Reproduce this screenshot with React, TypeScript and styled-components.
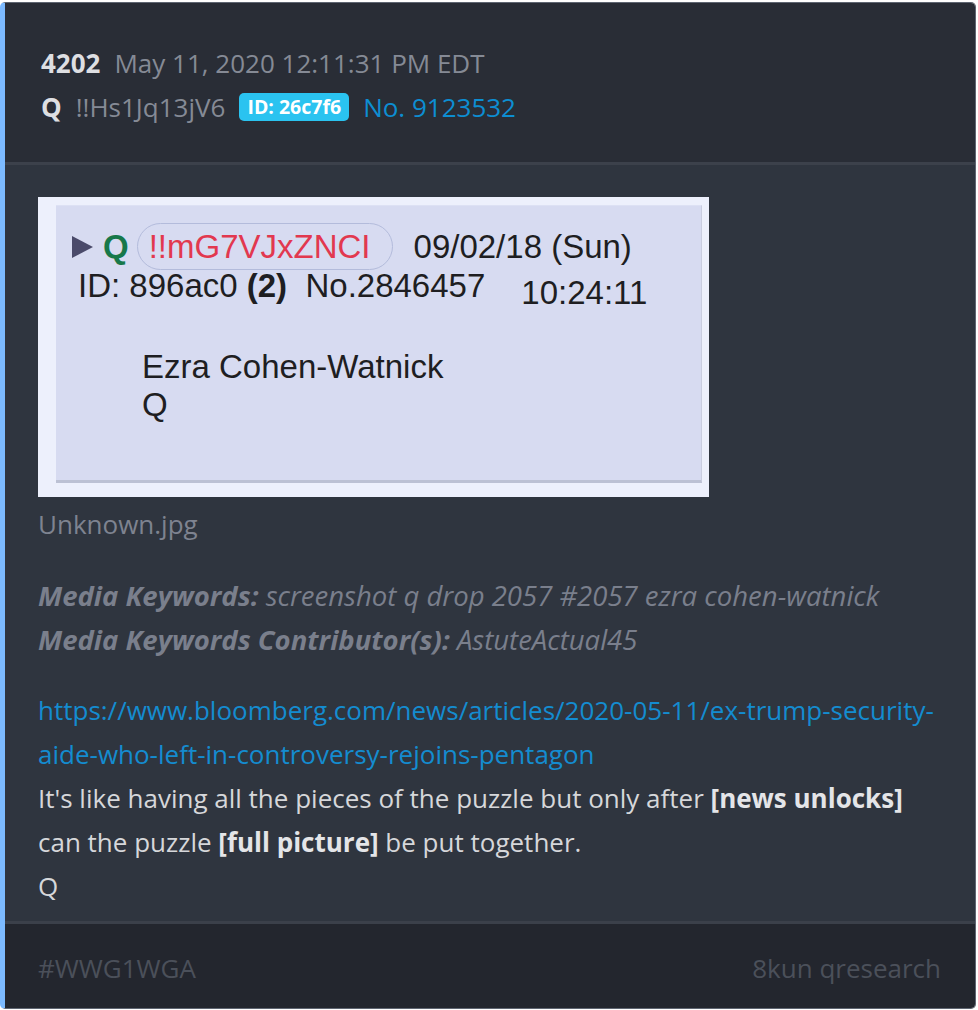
import React from "react";
import styled, { createGlobalStyle } from "styled-components";

const Global = createGlobalStyle`
  html, body { margin: 0; padding: 0; background: #ffffff; }
  body { font-family: "Open Sans", "Noto Sans", sans-serif; }
  * { box-sizing: border-box; }
`;

const Page = styled.div`
  padding: 2px 2px 1px 0;
`;

const Card = styled.article`
  width: 976px;
  border: 1px solid #5f6672;
  border-left: 5px solid #7cbaff;
  border-radius: 5px;
  overflow: hidden;
  display: flex;
  flex-direction: column;
`;

const Header = styled.header`
  background: #292d36;
  padding: 38px 20px 33px 36px;
  border-bottom: 3px solid #3c414b;
`;

const HeaderLine = styled.div`
  display: flex;
  align-items: center;
  gap: 14px;
  height: 44px;
  font-size: 26px;
  line-height: 44px;
`;

const Strong = styled.span`
  font-weight: 700;
  color: #dedfe2;
`;

const Muted = styled.span`
  color: #858a95;
`;

const Badge = styled.span`
  display: inline-flex;
  align-items: center;
  height: 28px;
  padding: 0 8px;
  border-radius: 5px;
  background: #2ac3f0;
  color: #ffffff;
  font-weight: 700;
  font-size: 19.5px;
  line-height: 28px;
`;

const PostNo = styled.span`
  color: #0d8ed2;
`;

const Body = styled.section`
  background: #2f353f;
  padding: 32px 32px 13px 33px;
  border-bottom: 3px solid #3b404a;
  font-size: 26px;
  line-height: 44px;
  color: #d6d7da;
`;

const Frame = styled.div`
  width: 671px;
  height: 300px;
  background: #edf0fc;
  padding: 8px 7px 14px 18px;
  display: flex;
`;

const Inner = styled.div`
  flex: 1;
  background: #d7dbf1;
  border-right: 1px solid #c9cde0;
  border-bottom: 3px solid #bcc1d4;
  border-top: 1px solid #dde1f4;
  font-family: "Liberation Sans", Arial, sans-serif;
  font-size: 33px;
  color: #1e1e22;
  padding: 17px 0 0 16px;
  display: flex;
  flex-direction: column;
`;

const Row = styled.div<{ $indent?: number; $top?: number }>`
  display: flex;
  align-items: center;
  margin-left: ${(p) => p.$indent ?? 0}px;
  margin-top: ${(p) => p.$top ?? 0}px;
  white-space: pre;
  line-height: 38px;
`;

const Triangle = styled.span`
  width: 0;
  height: 0;
  border-top: 11px solid transparent;
  border-bottom: 11px solid transparent;
  border-left: 21px solid #4a4a6a;
  margin-right: 10px;
`;

const GreenQ = styled.span`
  color: #17784a;
  font-weight: 700;
`;

const Pill = styled.span`
  display: inline-flex;
  align-items: center;
  height: 47px;
  margin-left: 8px;
  padding: 0 21px 0 11px;
  border: 1.5px solid #b3bbdb;
  border-radius: 24px;
  color: #e2384f;
`;

const DateText = styled.span`
  margin-left: 21px;
`;

const Time = styled.span`
  margin-left: 36px;
  margin-top: 14px;
`;

const Bold = styled.b`
  font-weight: 700;
`;

const Caption = styled.div`
  color: #7e8390;
  margin-top: 5px;
`;

const Keywords = styled.div`
  margin-top: 28px;
  color: #7a7f8c;
  font-style: italic;
  font-size: 27.5px;
`;

const KLabel = styled.span`
  font-weight: 700;
`;

const Message = styled.div`
  margin-top: 26px;
`;

const Link = styled.a`
  color: #148cd0;
  text-decoration: none;
  display: block;
  overflow-wrap: anywhere;
`;

const B = styled.b`
  font-weight: 700;
  color: #e4e5e8;
`;

const Footer = styled.footer`
  background: #23262e;
  height: 84px;
  display: flex;
  align-items: center;
  justify-content: space-between;
  padding: 4px 34px 0 33px;
  font-size: 26px;
  color: #4b505a;
`;

export default function App() {
  return (
    <Page>
      <Global />
      <Card>
        <Header>
          <HeaderLine>
            <Strong>4202</Strong>
            <Muted>May 11, 2020 12:11:31 PM EDT</Muted>
          </HeaderLine>
          <HeaderLine>
            <Strong>Q</Strong>
            <Muted>!!Hs1Jq13jV6</Muted>
            <Badge>ID: 26c7f6</Badge>
            <PostNo>No. 9123532</PostNo>
          </HeaderLine>
        </Header>
        <Body>
          <Frame>
            <Inner>
              <Row>
                <Triangle />
                <GreenQ>Q</GreenQ>
                <Pill>!!mG7VJxZNCI</Pill>
                <DateText>09/02/18 (Sun)</DateText>
              </Row>
              <Row $indent={6} $top={-10}>
                <span>ID: 896ac0 </span>
                <Bold>(2)</Bold>
                <span>  No.2846457</span>
                <Time>10:24:11</Time>
              </Row>
              <Row $indent={70} $top={36}>Ezra Cohen-Watnick</Row>
              <Row $indent={70}>Q</Row>
            </Inner>
          </Frame>
          <Caption>Unknown.jpg</Caption>
          <Keywords>
            <div>
              <KLabel>Media Keywords:</KLabel> screenshot q drop 2057 #2057 ezra cohen-watnick
            </div>
            <div>
              <KLabel>Media Keywords Contributor(s):</KLabel> AstuteActual45
            </div>
          </Keywords>
          <Message>
            <Link href="#">
              https://www.bloomberg.com/news/articles/2020-05-11/ex-trump-security-aide-who-left-in-controversy-rejoins-pentagon
            </Link>
            <div>
              It's like having all the pieces of the puzzle but only after <B>[news unlocks]</B> can the puzzle <B>[full picture]</B> be put together.
            </div>
            <div>Q</div>
          </Message>
        </Body>
        <Footer>
          <span>#WWG1WGA</span>
          <span>8kun qresearch</span>
        </Footer>
      </Card>
    </Page>
  );
}
